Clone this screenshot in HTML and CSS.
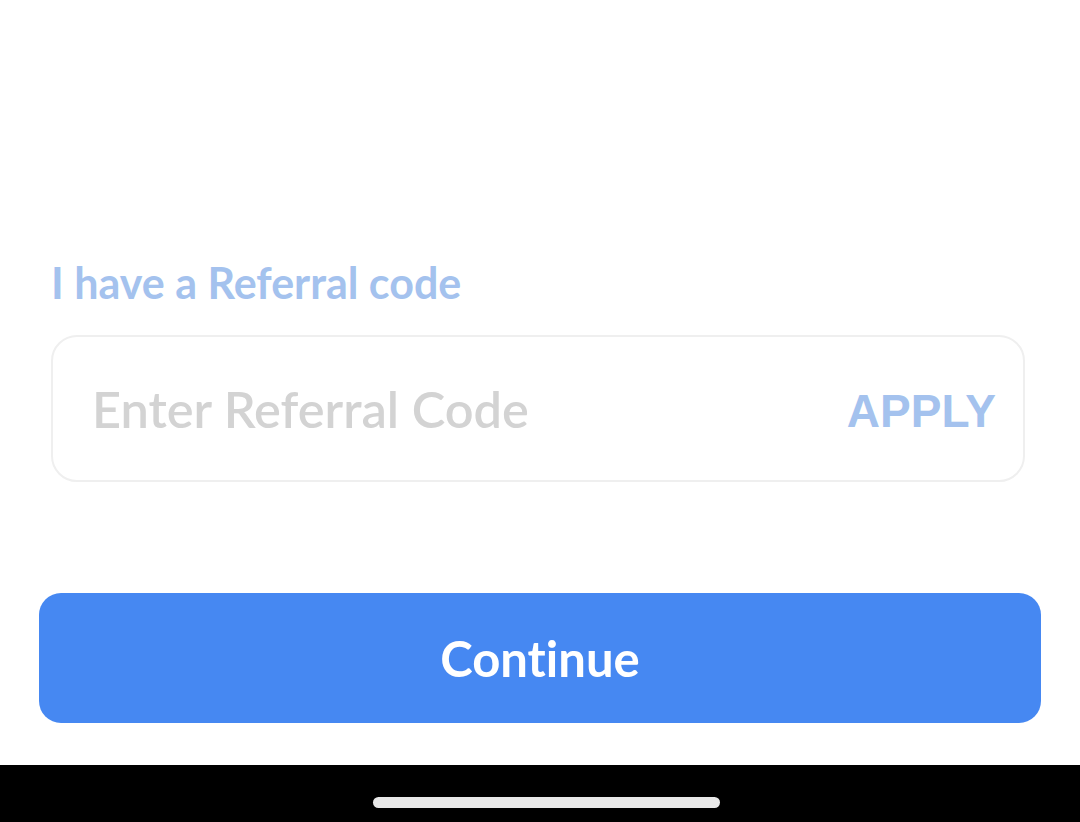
FILE: index.html
```html
<!DOCTYPE html>
<html lang="en">
<head>
<meta charset="utf-8">
<title>Referral code</title>
<link rel="stylesheet" href="styles.css">
</head>
<body>
<div class="screen">
  <main class="content">
    <div class="label">I have a Referral code</div>
    <div class="field">
      <span class="placeholder">Enter Referral Code</span>
      <span class="apply">APPLY</span>
    </div>
    <button class="continue">Continue</button>
  </main>
  <div class="navbar"><div class="indicator"></div></div>
</div>
</body>
</html>
```
FILE: styles.css
```css
html, body {
  margin: 0;
  padding: 0;
  background: #ffffff;
}
.screen {
  width: 1080px;
  height: 822px;
  display: flex;
  flex-direction: column;
  font-family: "Lato", "Noto Sans", sans-serif;
  font-variant-ligatures: none;
}
.content {
  flex: 1;
  display: flex;
  flex-direction: column;
  padding: 257px 39px 0 39px;
}
.label {
  margin-left: 12px;
  font-size: 43px;
  line-height: 52px;
  font-weight: 700;
  color: #a4c2ee;
}
.field {
  box-sizing: border-box;
  margin: 26px 16px 0 12px;
  height: 147px;
  border: 2px solid #efefef;
  border-radius: 26px;
  display: flex;
  align-items: center;
  justify-content: space-between;
  padding: 0 27px 0 39px;
}
.placeholder {
  font-size: 50.5px;
  font-weight: 600;
  color: #d3d3d3;
}
.apply {
  font-family: "Liberation Sans", "Arimo", sans-serif;
  font-size: 46px;
  font-weight: 700;
  color: #a4c2ee;
  padding-top: 4px;
}
.continue {
  margin-top: 111px;
  height: 130px;
  border: none;
  border-radius: 22px;
  background: #4688f2;
  color: #ffffff;
  font-family: "Lato", "Noto Sans", sans-serif;
  font-variant-ligatures: none;
  font-size: 49px;
  font-weight: 700;
  padding: 0;
}
.navbar {
  height: 57px;
  background: #000000;
  display: flex;
  justify-content: center;
  padding-top: 32px;
  box-sizing: border-box;
}
.indicator {
  width: 347px;
  height: 11px;
  margin-left: 13px;
  border-radius: 6px;
  background: #e8e8e8;
}
```
